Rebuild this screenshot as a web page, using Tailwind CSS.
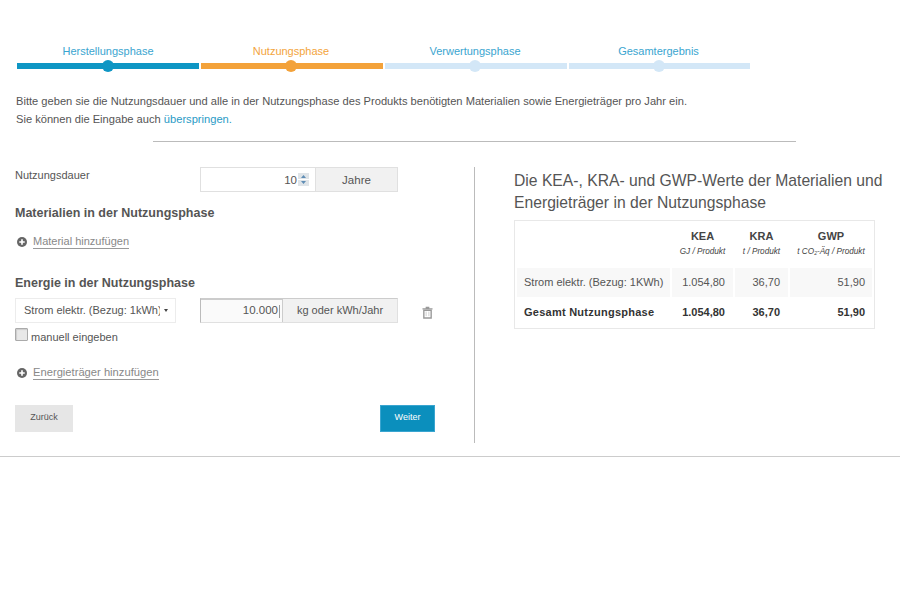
<!DOCTYPE html>
<html lang="de">
<head>
  <meta charset="UTF-8">
  <title>Nutzungsphase</title>
  <script src="https://cdn.jsdelivr.net/npm/@tailwindcss/browser@4"></script>
</head>
<body class="bg-white font-['Liberation_Sans',Arial,sans-serif] text-[#555]">

  <!-- Stepper -->
  <div class="flex gap-[2px] pl-[17px] pt-[44px] w-[752px] text-[11px] leading-[14px] text-center">
    <div class="w-[182px]">
      <div class="text-[#3aa5d0] mb-[5px]">Herstellungsphase</div>
      <div class="h-[6px] bg-[#0e96c4] flex justify-center items-center"><span class="w-[12px] h-[12px] rounded-full bg-[#0e96c4]"></span></div>
    </div>
    <div class="w-[182px]">
      <div class="text-[#f3a43c] mb-[5px] pr-[2px]">Nutzungsphase</div>
      <div class="h-[6px] bg-[#f3a23a] flex justify-center items-center pr-[2px]"><span class="w-[12px] h-[12px] rounded-full bg-[#f3a23a]"></span></div>
    </div>
    <div class="w-[182px]">
      <div class="text-[#3aa5d0] mb-[5px] pr-[2px]">Verwertungsphase</div>
      <div class="h-[6px] bg-[#d3e7f7] flex justify-center items-center pr-[2px]"><span class="w-[12px] h-[12px] rounded-full bg-[#d3e7f7]"></span></div>
    </div>
    <div class="w-[181px]">
      <div class="text-[#3aa5d0] mb-[5px] pr-[2px]">Gesamtergebnis</div>
      <div class="h-[6px] bg-[#d3e7f7] flex justify-center items-center pr-[2px]"><span class="w-[12px] h-[12px] rounded-full bg-[#d3e7f7]"></span></div>
    </div>
  </div>

  <!-- Intro -->
  <div class="pl-[16px] pt-[23px] text-[11.13px] leading-[18px]">
    <p>Bitte geben sie die Nutzungsdauer und alle in der Nutzungsphase des Produkts benötigten Materialien sowie Energieträger pro Jahr ein.</p>
    <p>Sie können die Eingabe auch <a class="text-[#2a9bc6]">überspringen.</a></p>
  </div>
  <div class="ml-[153px] mt-[13px] w-[643px] h-px bg-[#bbb]"></div>

  <div class="flex pt-[25px] pb-[13px] border-b border-[#ccc]">
    <!-- Left column -->
    <div class="w-[475px] h-[276px] pl-[15px] border-r border-[#bbb] shrink-0">
      <div class="w-[420px]">
        <div class="flex">
          <div class="w-[185px] text-[11px] pt-[1px] leading-[14px]">Nutzungsdauer</div>
          <div class="flex h-[25px] w-[198px] border border-[#e0e0e0] text-[11px]">
            <div class="w-[114px] flex items-center justify-end pr-[6px] pt-[2px] text-[11.5px]">10<svg class="ml-[1px] -mt-[2px]" width="11" height="13" viewBox="0 0 11 13"><rect width="11" height="13" fill="#dfe4e8"/><path d="M0 6.5h11" stroke="#fff"/><path d="M5.5 2 8 5H3zM5.5 11 3 8h5z" fill="#5f8db5"/></svg></div>
            <div class="flex-1 bg-[#f1f1f1] border-l border-[#e0e0e0] flex items-center justify-center pt-[2px] text-[11.5px]">Jahre</div>
          </div>
        </div>

        <h3 class="font-bold text-[12.5px] leading-[16px] mt-[13px]">Materialien in der Nutzungsphase</h3>

        <div class="flex items-center mt-[13px] h-[16px] pl-[2px]">
          <svg width="10" height="10" viewBox="0 0 11 11"><circle cx="5.5" cy="5.5" r="5.5" fill="#666"/><path d="M5.5 2.5v6M2.5 5.5h6" stroke="#fff" stroke-width="1.8"/></svg>
          <a class="ml-[6px] text-[11px] leading-[13px] text-[#888] border-b border-[#999]">Material hinzufügen</a>
        </div>

        <h3 class="font-bold text-[12.5px] leading-[16px] mt-[25px]">Energie in der Nutzungsphase</h3>

        <div class="flex items-center mt-[7px]">
          <div class="w-[161px] h-[25px] border border-[#ececec] flex items-center pl-[8px] text-[11px] shrink-0">
            <span class="w-[136px] overflow-hidden whitespace-nowrap">Strom elektr. (Bezug: 1kWh)</span>
            <span class="ml-[4px] border-x-[2.5px] border-x-transparent border-t-[3px] border-t-[#444]"></span>
          </div>
          <div class="flex h-[25px] w-[198px] ml-[24px] border border-[#e0e0e0] border-l-[#bbb] border-t-[#ccc] text-[11.5px]">
            <div class="w-[81px] flex items-center justify-end pr-[2px] border-t border-[#ccc] bg-[#fafafa]">10.000<span class="w-px h-[13px] bg-[#999] ml-px"></span></div>
            <div class="flex-1 bg-[#f1f1f1] border-l border-[#ccc] flex items-center justify-center text-[11px]">kg oder kWh/Jahr</div>
          </div>
          <svg class="ml-[24px] mt-[3px]" width="11" height="13" viewBox="0 0 12 14"><path d="M4 1.5h4M.5 3h11" stroke="#999" stroke-width="1.5"/><path d="M2 4.5h8V13H2z" fill="none" stroke="#999" stroke-width="1.5"/><path d="M4.5 6v5M7.5 6v5" stroke="#ccc"/></svg>
        </div>

        <div class="flex items-center text-[11px] leading-[14px] h-[15px] mt-[6px]">
          <span class="w-[13px] h-[13px] border border-[#aaa] bg-[#e8e8e8] rounded-[1px] mr-[3px] -mt-[4px] shadow-[inset_1px_1px_1px_#ccc]"></span>
          manuell eingeben
        </div>

        <div class="flex items-center mt-[21px] h-[16px] pl-[2px]">
          <svg width="10" height="10" viewBox="0 0 11 11"><circle cx="5.5" cy="5.5" r="5.5" fill="#666"/><path d="M5.5 2.5v6M2.5 5.5h6" stroke="#fff" stroke-width="1.8"/></svg>
          <a class="ml-[6px] text-[11.2px] leading-[13px] text-[#888] border-b border-[#999]">Energieträger hinzufügen</a>
        </div>

        <div class="flex justify-between mt-[24px]">
          <button class="w-[58px] h-[27px] bg-[#e6e6e6] text-[9px] text-[#555] pb-[2px]">Zurück</button>
          <button class="w-[55px] h-[27px] bg-[#0b8fbd] text-[9px] text-white pb-[2px] border border-[#3aa5d0]">Weiter</button>
        </div>
      </div>
    </div>

    <!-- Right column -->
    <div class="pl-[39px] w-[400px]">
      <h2 class="text-[15.7px] leading-[22px] text-[#555] mt-[3px] whitespace-nowrap">Die KEA-, KRA- und GWP-Werte der Materialien und<br>Energieträger in der Nutzungsphase</h2>
      <div class="mt-[6px] w-[361px] h-[109px] border border-[#e8e8e8]">
        <table class="w-full border-separate border-spacing-x-[2px] border-spacing-y-0 text-[11px] table-fixed">
          <thead>
            <tr class="h-[47px]">
              <th class="w-[153px]"></th>
              <th class="w-[61px] align-top pt-[8px] font-bold text-[#444] leading-[14px]">KEA<div class="font-normal italic text-[8.2px] leading-[12px] mt-[3px]">GJ / Produkt</div></th>
              <th class="w-[53px] align-top pt-[8px] font-bold text-[#444] leading-[14px]">KRA<div class="font-normal italic text-[8.2px] leading-[12px] mt-[3px]">t / Produkt</div></th>
              <th class="align-top pt-[8px] font-bold text-[#444] leading-[14px]">GWP<div class="font-normal italic text-[8.2px] leading-[12px] mt-[3px] whitespace-nowrap">t CO<sub class="text-[5px]">2</sub>-Äq / Produkt</div></th>
            </tr>
          </thead>
          <tbody>
            <tr class="h-[29px] bg-[#f8f8f8]">
              <td class="pl-[7px] whitespace-nowrap">Strom elektr. (Bezug: 1KWh)</td>
              <td class="text-right pr-[8px]">1.054,80</td>
              <td class="text-right pr-[8px]">36,70</td>
              <td class="text-right pr-[7px]">51,90</td>
            </tr>
            <tr class="h-[30px] font-bold text-[#333]">
              <td class="pl-[7px] whitespace-nowrap tracking-[0.25px]">Gesamt Nutzungsphase</td>
              <td class="text-right pr-[8px]">1.054,80</td>
              <td class="text-right pr-[8px]">36,70</td>
              <td class="text-right pr-[7px]">51,90</td>
            </tr>
          </tbody>
        </table>
      </div>
    </div>
  </div>
</body>
</html>
